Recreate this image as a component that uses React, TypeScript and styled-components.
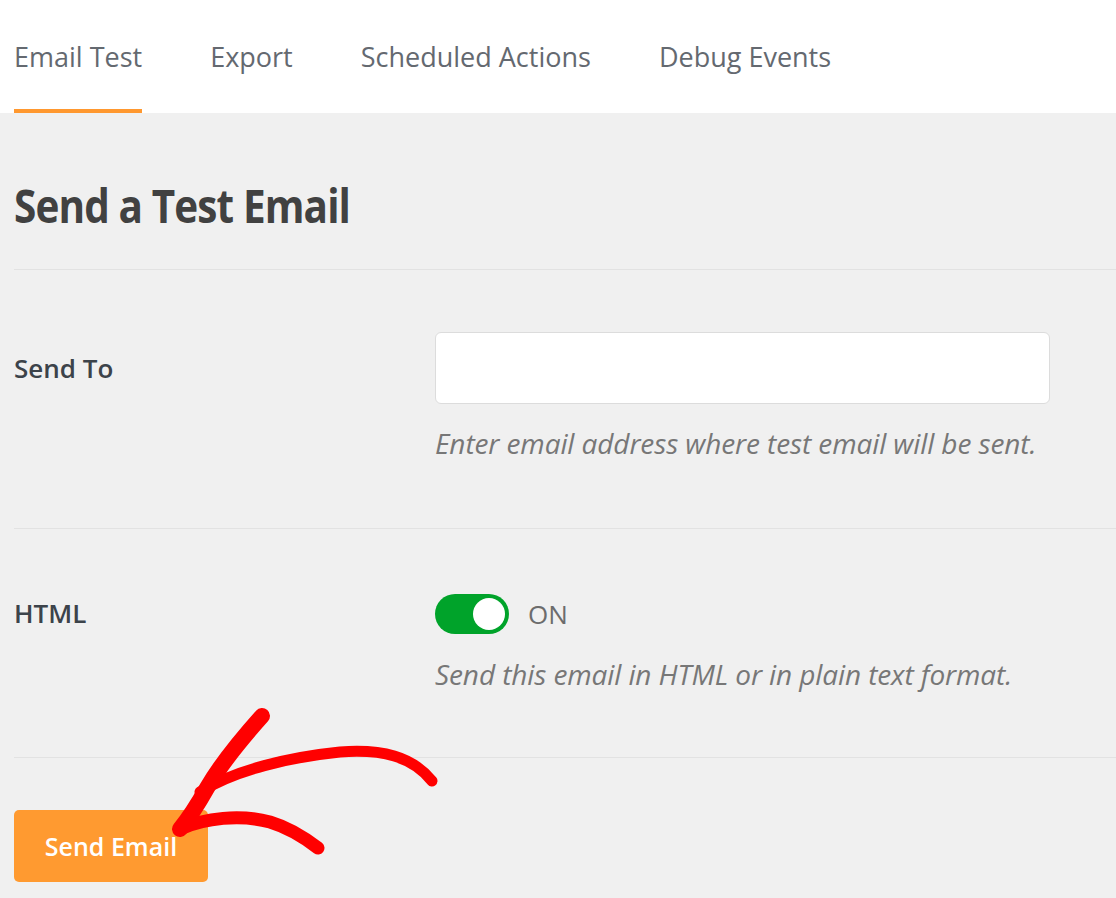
import React from 'react';
import styled, { createGlobalStyle } from 'styled-components';

const GlobalStyle = createGlobalStyle`
  html, body {
    margin: 0;
    padding: 0;
    background: #f0f0f0;
    font-family: "Open Sans", "Noto Sans", sans-serif;
  }
  * { box-sizing: border-box; }
`;

const Page = styled.div`
  width: 1116px;
  height: 898px;
  overflow: hidden;
  position: relative;
  background: #f0f0f0;
`;

const TabBar = styled.nav`
  display: flex;
  height: 113px;
  padding-left: 14px;
  gap: 68px;
  background: #fff;
`;

const Tab = styled.div<{ $active?: boolean }>`
  display: flex;
  align-items: center;
  font-size: 27px;
  color: #646970;
  border-bottom: 4px solid ${p => (p.$active ? '#ff982f' : 'transparent')};
  border-top: 4px solid transparent;
`;

const Content = styled.main`
  padding-left: 14px;
`;

const HeadingBox = styled.div`
  padding: 62px 0 34px;
  border-bottom: 1px solid #e2e2e2;
`;

const Heading = styled.h1`
  margin: 0;
  font-size: 46px;
  line-height: 60px;
  font-weight: 700;
  letter-spacing: -1px;
  color: #414141;
  transform: scaleX(0.88);
  transform-origin: left center;
`;

const Row = styled.section<{ $top: number; $bottom: number }>`
  display: grid;
  grid-template-columns: 421px 1fr;
  padding: ${p => p.$top}px 0 ${p => p.$bottom}px;
  border-bottom: 1px solid #e2e2e2;
`;

const Label = styled.div<{ $h: number }>`
  font-size: 26px;
  font-weight: 600;
  color: #3c434a;
  line-height: ${p => p.$h}px;
`;

const Field = styled.div<{ $gap: number }>`
  display: flex;
  flex-direction: column;
  gap: ${p => p.$gap}px;
`;

const Input = styled.input`
  width: 615px;
  height: 72px;
  background: #fff;
  border: 1px solid #dcdcdc;
  border-radius: 6px;
  font-size: 24px;
  padding: 0 16px;
  outline: none;
`;

const Help = styled.p`
  margin: 0;
  font-size: 28px;
  font-style: italic;
  color: #777;
  line-height: 38px;
  letter-spacing: -0.1px;
`;

const ToggleRow = styled.div`
  display: flex;
  align-items: center;
  gap: 19px;
  height: 41px;
`;

const Switch = styled.span`
  position: relative;
  width: 74px;
  height: 40px;
  border-radius: 20px;
  background: #00a32a;
`;

const Knob = styled.span`
  position: absolute;
  top: 4px;
  right: 4px;
  width: 32px;
  height: 32px;
  border-radius: 50%;
  background: #fff;
`;

const OnText = styled.span`
  font-size: 26px;
  color: #6c6c6c;
`;

const Footer = styled.div`
  padding-top: 52px;
`;

const Button = styled.button`
  width: 194px;
  height: 72px;
  background: #ff9a30;
  border: none;
  border-radius: 5px;
  color: #fff;
  font-family: inherit;
  font-size: 25px;
  font-weight: 600;
`;

const Arrow = styled.svg`
  position: absolute;
  left: 0;
  top: 0;
  pointer-events: none;
`;

export default function App() {
  return (
    <Page>
      <GlobalStyle />
      <TabBar>
        <Tab $active>Email Test</Tab>
        <Tab>Export</Tab>
        <Tab>Scheduled Actions</Tab>
        <Tab>Debug Events</Tab>
      </TabBar>
      <Content>
        <HeadingBox>
          <Heading>Send a Test Email</Heading>
        </HeadingBox>
        <Row $top={62} $bottom={66}>
          <Label $h={72}>Send To</Label>
          <Field $gap={20}>
            <Input type="text" />
            <Help>Enter email address where test email will be sent.</Help>
          </Field>
        </Row>
        <Row $top={64} $bottom={64}>
          <Label $h={41}>HTML</Label>
          <Field $gap={21}>
            <ToggleRow>
              <Switch><Knob /></Switch>
              <OnText>ON</OnText>
            </ToggleRow>
            <Help>Send this email in HTML or in plain text format.</Help>
          </Field>
        </Row>
        <Footer>
          <Button>Send Email</Button>
        </Footer>
      </Content>
      <Arrow width="1116" height="898" viewBox="0 0 1116 898">
        <g fill="none" stroke="#ff0000" strokeLinecap="round" strokeLinejoin="round">
          <path d="M262 716 C245 735 222 762 207 788 C198 804 189 818 180 829" strokeWidth="16" />
          <path d="M200 792 C235 770 290 757 340 752 C382 749 412 756 432 781" strokeWidth="11" />
          <path d="M180 829 C205 818 240 814 270 822 C290 828 305 838 318 848" strokeWidth="13" />
        </g>
      </Arrow>
    </Page>
  );
}
